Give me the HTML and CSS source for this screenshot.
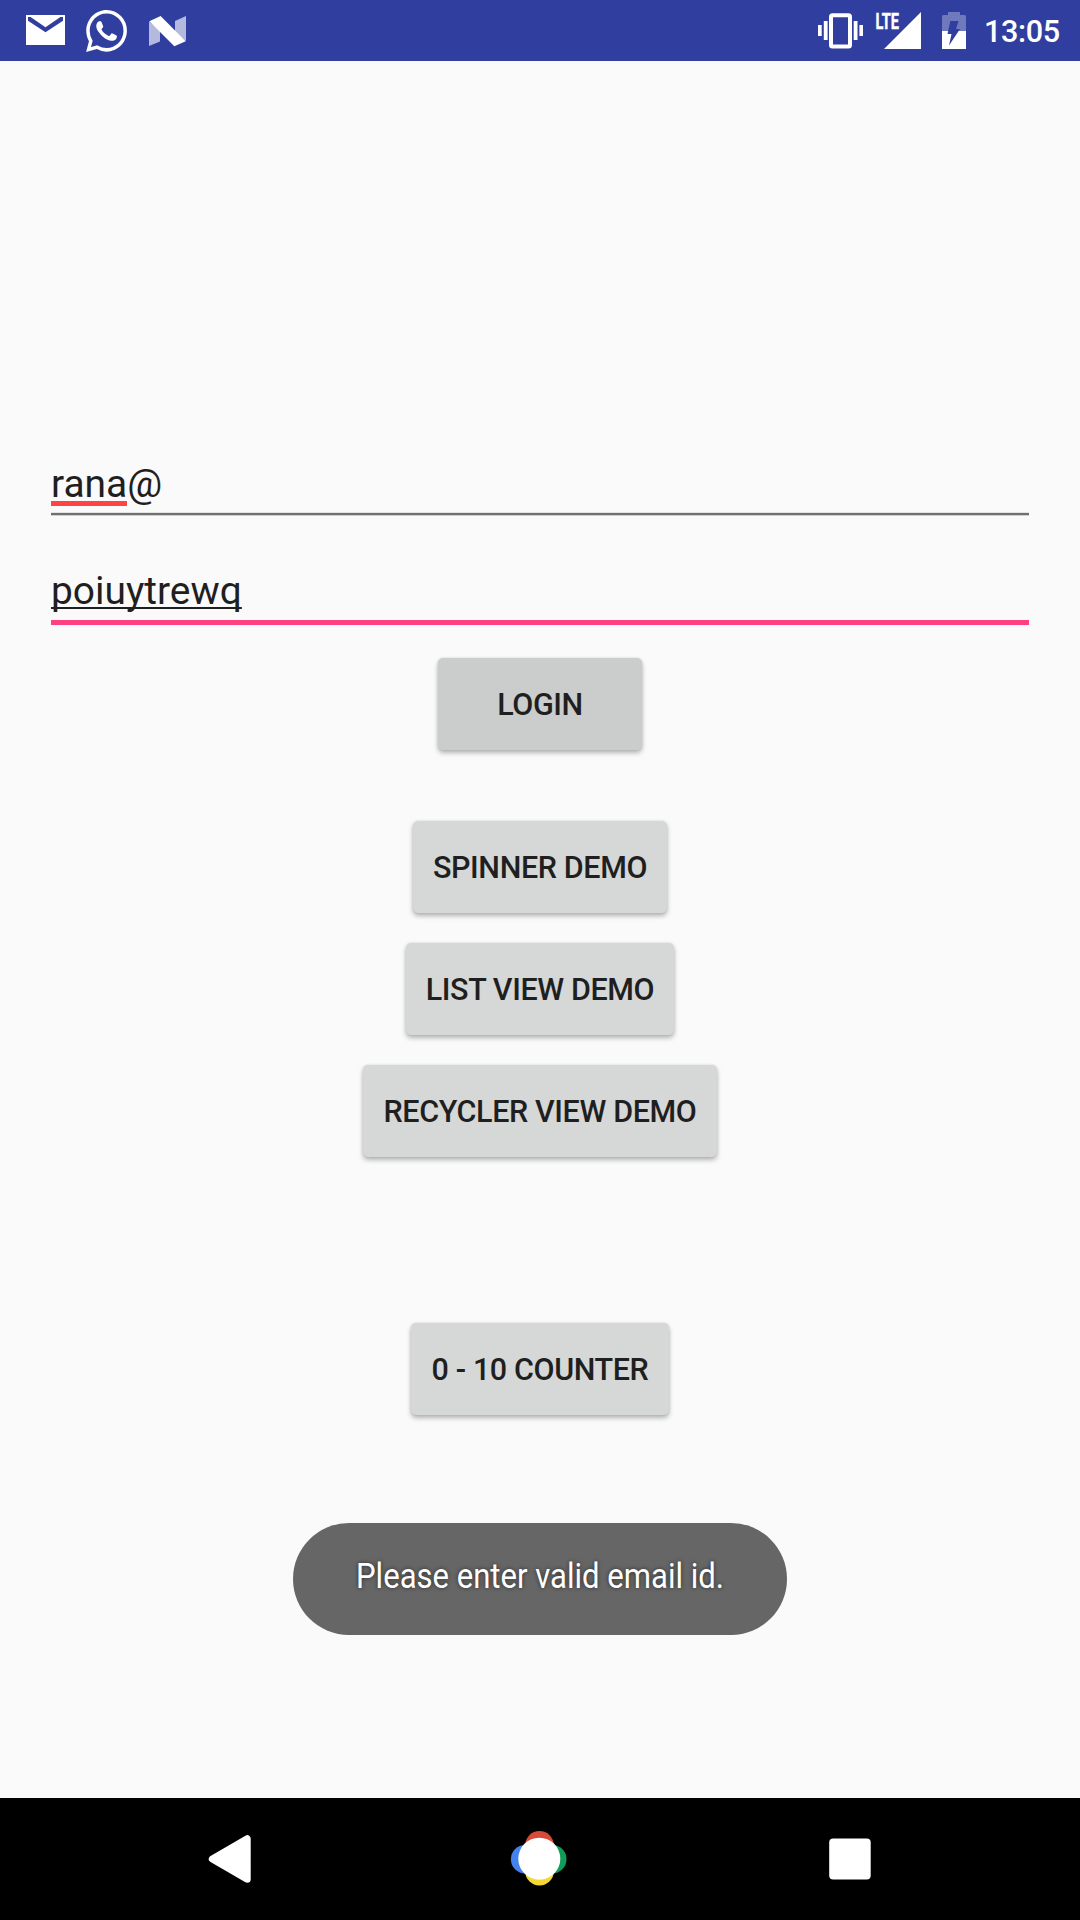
FILE: index.html
```html
<!DOCTYPE html>
<html lang="en">
<head>
<meta charset="utf-8">
<title>Login</title>
<link rel="stylesheet" href="styles.css">
</head>
<body>
<div class="screen">
  <header class="status-bar">
    <div class="notifications">
      <svg class="icon-mail" width="39" height="31" viewBox="0 0 39 31" aria-label="Mail">
        <path fill="#fff" d="M0 0h39v30H0z"/>
        <path fill="#303f9f" d="M2 2h2.6L19.5 12.2 34.4 2H37v3.8L19.5 17.2 2 5.8z"/>
      </svg>
      <svg class="icon-chat" width="41" height="42" viewBox="0 0 24 24" preserveAspectRatio="none" aria-label="WhatsApp">
        <path fill="#fff" d="M17.472 14.382c-.297-.149-1.758-.867-2.03-.967-.273-.099-.471-.148-.67.15-.197.297-.767.966-.94 1.164-.173.199-.347.223-.644.075-.297-.15-1.255-.463-2.39-1.475-.883-.788-1.48-1.761-1.653-2.059-.173-.297-.018-.458.13-.606.134-.133.298-.347.446-.52.149-.174.198-.298.298-.497.099-.198.05-.371-.025-.52-.075-.149-.669-1.612-.916-2.207-.242-.579-.487-.5-.669-.51-.173-.008-.371-.01-.57-.01-.198 0-.52.074-.792.372-.272.297-1.04 1.016-1.04 2.479 0 1.462 1.065 2.875 1.213 3.074.149.198 2.096 3.2 5.077 4.487.709.306 1.262.489 1.694.625.712.227 1.36.195 1.871.118.571-.085 1.758-.719 2.006-1.413.248-.694.248-1.289.173-1.413-.074-.124-.272-.198-.57-.347m-5.421 7.403h-.004a9.87 9.87 0 01-5.031-1.378l-.361-.214-3.741.982.998-3.648-.235-.374a9.86 9.86 0 01-1.51-5.26c.001-5.45 4.436-9.884 9.888-9.884 2.64 0 5.122 1.03 6.988 2.898a9.825 9.825 0 012.893 6.994c-.003 5.45-4.437 9.884-9.885 9.884m8.413-18.297A11.815 11.815 0 0012.05 0C5.495 0 .16 5.335.157 11.892c0 2.096.547 4.142 1.588 5.945L.057 24l6.305-1.654a11.882 11.882 0 005.683 1.448h.005c6.554 0 11.89-5.335 11.893-11.893a11.821 11.821 0 00-3.48-8.413z"/>
      </svg>
      <svg class="icon-nougat" width="37" height="31" viewBox="0 0 37 31" aria-label="Android N">
        <path fill="#b4b9de" d="M0 5.5 11 14v11.5L0 30zM26 5l11-5v25L26 17z"/>
        <path fill="#fff" d="M.3 5.3 11.6 0 36.7 25.2 25.3 30.2z"/>
      </svg>
    </div>
    <div class="system">
      <svg class="icon-vibrate" width="45" height="37" viewBox="0 0 45 37" aria-label="Vibrate">
        <rect x="13" y="2.2" width="19" height="31.2" rx="1.5" fill="none" stroke="#fff" stroke-width="4"/>
        <path fill="#fff" d="M0 12h3.7v11H0zM5.8 8h3.8v19H5.8zM35.7 8h3.8v19h-3.8zM41.4 12H45v11h-3.6z"/>
      </svg>
      <svg class="icon-signal" width="47" height="46" viewBox="-1 -8 47 46">
        <text class="lte" x="0.500" y="17.200" textLength="23.500" lengthAdjust="spacingAndGlyphs">LTE</text>
        <path fill="#fff" d="M9 37 46 0v37z"/>
      </svg>
      <svg class="icon-battery" width="24" height="37" viewBox="0 0 24 37" aria-label="Battery charging">
        <path fill="#7079bc" d="M1.5 3H6V0h12v3h4.5Q24 3 24 4.500V19H0V4.500Q0 3 1.500 3z"/>
        <path fill="#fff" d="M0 19h24v18H0z"/>
        <path fill="#303f9f" d="M8.300 9h8.200L14 17h4L7 33.500 9.500 22H5.500z"/>
      </svg>
      <time class="clock">13:05</time>
    </div>
  </header>

  <main class="content">
    <div class="field"><span class="misspelled">rana</span>@</div>
    <div class="field focused"><span class="composing">poiuytrewq</span></div>
    <button class="btn login">LOGIN</button>
    <div class="demos">
      <button class="btn spinner">SPINNER DEMO</button>
      <button class="btn list">LIST VIEW DEMO</button>
      <button class="btn recycler">RECYCLER VIEW DEMO</button>
    </div>
    <button class="btn counter">0 - 10 COUNTER</button>
  </main>

  <div class="toast" role="status">
    <svg width="494" height="112" viewBox="0 0 494 112">
      <text class="toast-text" x="63" y="65.300" textLength="368" lengthAdjust="spacingAndGlyphs">Please enter valid email id.</text>
    </svg>
  </div>

  <nav class="nav-bar">
    <svg width="60" height="60" viewBox="200 1829 60 60" aria-label="Back">
      <path fill="#fff" stroke="#fff" stroke-width="7" stroke-linejoin="round" d="M212.300 1859 247.200 1838.700v40.600z"/>
    </svg>
    <svg width="60" height="60" viewBox="510 1829 60 60" aria-label="Home">
      <circle cx="525.200" cy="1859.200" r="14.300" fill="#4482ee"/>
      <circle cx="552.200" cy="1859.200" r="14.300" fill="#129c5c"/>
      <circle cx="539.500" cy="1845.300" r="14.300" fill="#d94a38"/>
      <circle cx="539.500" cy="1871.200" r="14.300" fill="#f6d833"/>
      <circle cx="539.300" cy="1858.700" r="21" fill="#fff"/>
    </svg>
    <svg width="60" height="60" viewBox="820 1829 60 60" aria-label="Recent apps">
      <rect x="829.200" y="1838.500" width="41.500" height="41" rx="4" fill="#fff"/>
    </svg>
  </nav>
</div>
</body>
</html>
```
FILE: styles.css
```css
* {
  box-sizing: border-box;
}

body {
  margin: 0;
  font-family: Roboto, sans-serif;
  color: #1f1f1f;
}

svg {
  display: block;
  flex: none;
}

.screen {
  position: relative;
  display: flex;
  flex-direction: column;
  width: 1080px;
  height: 1920px;
  overflow: hidden;
  background: #fafafa;
}

.status-bar {
  display: flex;
  justify-content: space-between;
  height: 61px;
  padding: 0 20px 0 26px;
  background: #303f9f;
  color: #fff;
}

.notifications,
.system {
  display: flex;
  align-items: flex-start;
}

.notifications {
  padding-top: 10px;
}

.icon-mail {
  margin-top: 5px;
}

.icon-chat {
  margin-left: 21px;
}

.icon-nougat {
  margin: 6px 0 0 22px;
}

.system {
  padding-top: 4px;
}

.icon-vibrate {
  margin-top: 9px;
}

.icon-signal {
  margin-left: 11px;
}

.icon-battery {
  margin: 8px 0 0 21px;
}

.lte {
  font-size: 22px;
  font-weight: 700;
  fill: #fff;
  stroke: #fff;
  stroke-width: 0.4px;
}

.clock {
  width: 76px;
  margin: 10px 0 0 18px;
  font-size: 30.6px;
  font-weight: 500;
  letter-spacing: -0.4px;
  line-height: 36px;
}

.content {
  display: flex;
  flex: 1;
  flex-direction: column;
  align-items: center;
  padding: 399px 51px 0;
}

.field {
  width: 100%;
  height: 55px;
  border-bottom: 2px solid #707070;
  box-shadow: 0 1px #cfcfcf, 0 -1px #e3e3e3 inset;
  font-size: 38.9px;
  line-height: 48px;
}

.focused {
  height: 60px;
  margin-top: 50px;
  padding-top: 2px;
  border-bottom: 5px solid #ff4081;
  box-shadow: none;
}

.misspelled {
  display: inline-block;
  height: 46px;
  border-bottom: 5px solid #ff4444;
}

.composing {
  text-decoration: underline;
  text-decoration-thickness: 2px;
  text-decoration-skip-ink: none;
  text-underline-offset: 3px;
}

.btn {
  height: 92px;
  padding: 2px 0 0;
  border: 0;
  border-radius: 5px;
  background: #d6d8d7;
  box-shadow: 0 3px 5px rgba(0, 0, 0, 0.28), 0 0 3px rgba(0, 0, 0, 0.1);
  color: #1f1f1f;
  font: 500 30.5px/90px Roboto, sans-serif;
  letter-spacing: -0.38px;
  white-space: nowrap;
}

.login {
  width: 204px;
  margin-top: 33px;
  background: #cbcdcc;
}

.demos {
  display: flex;
  flex-direction: column;
  align-items: center;
  gap: 30px;
  margin-top: 71px;
}

.spinner {
  width: 254px;
}

.list {
  width: 268px;
}

.recycler {
  width: 354px;
}

.counter {
  width: 258px;
  margin-top: 166px;
}

.toast {
  position: absolute;
  top: 1523px;
  left: 293px;
  width: 494px;
  height: 112px;
  border-radius: 56px;
  background: #666;
}

.toast-text {
  font-size: 35.5px;
  fill: #fff;
  text-shadow: 0 0 5px rgba(0, 0, 0, 0.6);
}

.nav-bar {
  display: flex;
  justify-content: space-between;
  height: 122px;
  padding: 31px 200px 0;
  background: #000;
}
```
